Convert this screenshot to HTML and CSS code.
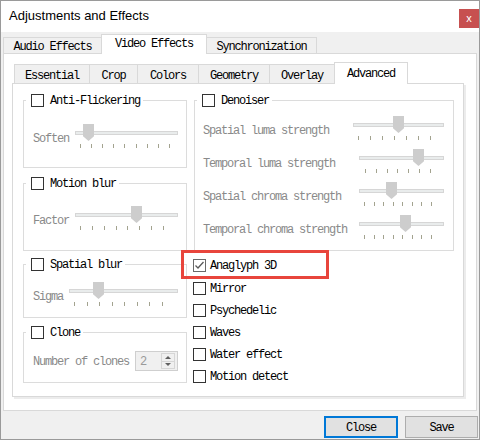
FILE: index.html
```html
<!DOCTYPE html>
<html>
<head>
<meta charset="utf-8">
<link rel="stylesheet" href="styles.css">
</head>
<body>
<div class="window">
  <header class="titlebar">
    <span class="title">Adjustments and Effects</span>
    <span class="close">x</span>
  </header>
  <main class="client">
    <nav class="tabbar outer">
      <span class="tab first t-audio">Audio Effects</span>
      <span class="tab sel t-video">Video Effects</span>
      <span class="tab last t-sync">Synchronization</span>
    </nav>
    <section class="pane outer-pane">
      <nav class="tabbar inner">
        <span class="tab t-ess">Essential</span>
        <span class="tab t-crop">Crop</span>
        <span class="tab t-col">Colors</span>
        <span class="tab t-geo">Geometry</span>
        <span class="tab t-ovl">Overlay</span>
        <span class="tab sel t-adv">Advanced</span>
      </nav>
      <div class="pane inner-pane">
        <div class="col col-left">
          <div class="group g1">
            <div class="gh"><span class="cb"></span><span class="txt">Anti-Flickering</span></div>
            <div class="row">
              <span class="lbl">Soften</span>
              <div class="slider grow">
                <div class="thumb" style="left:8px"></div>
                <div class="track"></div>
                <div class="ticks tk-soften"><i></i><i></i><i></i><i></i><i></i><i></i><i></i><i></i><i></i></div>
              </div>
            </div>
          </div>
          <div class="group g2">
            <div class="gh"><span class="cb"></span><span class="txt">Motion blur</span></div>
            <div class="row">
              <span class="lbl">Factor</span>
              <div class="slider grow">
                <div class="thumb" style="left:56px"></div>
                <div class="track"></div>
                <div class="ticks tk-factor"><i></i><i></i><i></i><i></i><i></i><i></i><i></i><i></i></div>
              </div>
            </div>
          </div>
          <div class="group g3">
            <div class="gh"><span class="cb"></span><span class="txt">Spatial blur</span></div>
            <div class="row">
              <span class="lbl">Sigma</span>
              <div class="slider grow">
                <div class="thumb" style="left:24px"></div>
                <div class="track"></div>
                <div class="ticks tk-sigma"><i></i><i></i><i></i><i></i><i></i><i></i><i></i><i></i></div>
              </div>
            </div>
          </div>
          <div class="group g4">
            <div class="gh"><span class="cb"></span><span class="txt">Clone</span></div>
            <div class="row">
              <span class="lbl plain">Number of clones</span>
              <div class="spin">
                <span class="val">2</span>
                <span class="spin-btns">
                  <span class="arr up"></span>
                  <span class="arr down"></span>
                </span>
              </div>
            </div>
          </div>
        </div>
        <div class="col col-right">
          <div class="group denoiser">
            <div class="gh"><span class="cb"></span><span class="txt">Denoiser</span></div>
            <div class="drow first">
              <span class="lbl">Spatial luma strength</span>
              <div class="slider w91">
                <div class="thumb" style="left:40px"></div>
                <div class="track"></div>
                <div class="ticks tk-sl"><i></i><i></i><i></i><i></i><i></i><i></i><i></i></div>
              </div>
            </div>
            <div class="drow">
              <span class="lbl">Temporal luma strength</span>
              <div class="slider w85">
                <div class="thumb" style="left:54px"></div>
                <div class="track"></div>
                <div class="ticks tk-tl"><i></i><i></i><i></i><i></i><i></i><i></i><i></i></div>
              </div>
            </div>
            <div class="drow">
              <span class="lbl">Spatial chroma strength</span>
              <div class="slider w85">
                <div class="thumb" style="left:27px"></div>
                <div class="track"></div>
                <div class="ticks tk-ch"><i></i><i></i><i></i><i></i><i></i><i></i><i></i><i></i></div>
              </div>
            </div>
            <div class="drow">
              <span class="lbl">Temporal chroma strength</span>
              <div class="slider w85">
                <div class="thumb" style="left:41px"></div>
                <div class="track"></div>
                <div class="ticks tk-ch"><i></i><i></i><i></i><i></i><i></i><i></i><i></i><i></i></div>
              </div>
            </div>
          </div>
          <ul class="checks">
            <li class="first"><span class="cb checked"><svg width="11" height="11" viewBox="0 0 11 11"><polyline points="1.5,5.5 4,8 9.5,2" fill="none" stroke="#5a5a5a" stroke-width="1.3"/></svg></span><span class="txt">Anaglyph 3D</span></li>
            <li><span class="cb"></span><span class="txt">Mirror</span></li>
            <li><span class="cb"></span><span class="txt">Psychedelic</span></li>
            <li><span class="cb"></span><span class="txt">Waves</span></li>
            <li><span class="cb"></span><span class="txt">Water effect</span></li>
            <li><span class="cb"></span><span class="txt">Motion detect</span></li>
          </ul>
        </div>
      </div>
    </section>
    <footer class="buttons">
      <button class="btn default">Close</button>
      <button class="btn save">Save</button>
    </footer>
  </main>
  <div class="annot"></div>
</div>
</body>
</html>
```

FILE: styles.css
```css
body {
  margin: 0;
}

.window {
  position: relative;
  width: 480px;
  height: 440px;
  box-sizing: border-box;
  border: 1px solid #9a9a9a;
  background: #f0f0f0;
  font-family: "Liberation Mono", "DejaVu Sans Mono", monospace;
  font-size: 12px;
  letter-spacing: -1.2px;
  color: #000;
  overflow: hidden;
}

/* title bar */
.titlebar {
  height: 31px;
  background: #fff;
  display: flex;
  justify-content: space-between;
  align-items: flex-start;
}

.title {
  font-family: "Liberation Sans", Arial, sans-serif;
  font-size: 13px;
  letter-spacing: 0;
  line-height: 14px;
  margin: 8px 0 0 8px;
}

.close {
  width: 20px;
  height: 19px;
  margin-top: 8px;
  background: #c75050;
  color: #fff;
  font-family: "Liberation Sans", Arial, sans-serif;
  font-size: 11px;
  letter-spacing: 0;
  display: flex;
  align-items: center;
  justify-content: center;
  line-height: 1;
  padding-bottom: 1px;
  box-sizing: border-box;
}

/* client area */
.client {
  padding: 2px 2px 0 2px;
}

.tabbar {
  display: flex;
  align-items: flex-end;
  position: relative;
  z-index: 1;
  margin-bottom: -1px;
}

.tab {
  box-sizing: border-box;
  border: 1px solid #d9d9d9;
  border-bottom: none;
  border-right: none;
  background: #f0f0f0;
  display: flex;
  align-items: center;
  justify-content: center;
  margin-bottom: 1px;
  white-space: nowrap;
  padding-top: 2px;
}

.tab.sel {
  background: #fff;
  border-right: 1px solid #d9d9d9;
  margin-bottom: 0;
}

.tab.last {
  border-left: none;
  border-right: 1px solid #d9d9d9;
}

.outer.tabbar {
  height: 20px;
}

.outer .tab {
  height: 16px;
}

.outer .tab.sel {
  height: 20px;
  padding-top: 0;
  padding-bottom: 1px;
}

.t-audio { width: 98px; }
.t-video { width: 106px; }
.t-sync { width: 110px; }

.inner.tabbar {
  height: 22px;
  padding-left: 2px;
}

.inner .tab {
  height: 19px;
  padding-top: 3px;
}

.inner .tab.sel {
  height: 22px;
  padding-top: 1px;
  padding-bottom: 0;
}

.t-ess { width: 75px; }
.t-crop { width: 48px; }
.t-col { width: 61px; }
.t-geo { width: 71px; }
.t-ovl { width: 65px; }
.t-adv { width: 74px; }

.pane {
  box-sizing: border-box;
  border: 1px solid #d9d9d9;
  background: #fff;
}

.outer-pane {
  height: 358px;
  padding: 8px 12px 13px 8px;
}

.inner-pane {
  height: 314px;
  display: flex;
  gap: 6px;
  padding: 10px 0 0 10px;
  box-shadow: 2px 2px 0 #ececec;
}

.col {
  display: flex;
  flex-direction: column;
}

.col-left { width: 164px; }
.col-right { width: 261px; }

/* group boxes */
.group {
  box-sizing: border-box;
  border: 1px solid #dcdcdc;
}

.gh {
  display: flex;
  align-items: center;
  gap: 6px;
  width: fit-content;
  height: 13px;
  line-height: 13px;
  margin: -7px 0 0 2px;
  padding: 0 3px 0 5px;
  background: #fff;
}

.txt {
  padding-top: 2px;
  line-height: 13px;
}

.g1 { margin-top: 6px; height: 68px; }
.g2 { margin-top: 15px; height: 68px; }
.g3 { margin-top: 13px; height: 54px; }
.g4 { margin-top: 14px; height: 51px; }

.denoiser {
  margin: 6px 0 0 1px;
  height: 151px;
}

.row {
  display: flex;
  align-items: flex-start;
  gap: 6px;
  padding: 0 8px 0 9px;
}

.g1 .row { margin-top: 17px; }
.g2 .row { margin-top: 16px; }
.g3 .row { margin-top: 11px; }
.g4 .row { margin-top: 12px; align-items: center; }

.lbl {
  color: #8a8a8a;
  line-height: 12px;
  margin-top: 9px;
  white-space: nowrap;
}

.lbl.plain {
  margin-top: 0;
  padding-top: 2px;
}

.drow {
  display: flex;
  justify-content: space-between;
  align-items: flex-start;
  padding: 0 9px 0 8px;
  margin-top: 9px;
}

/* checkbox */
.cb {
  box-sizing: border-box;
  width: 13px;
  height: 13px;
  border: 1px solid #333;
  background: #fff;
  flex: none;
  display: flex;
  align-items: center;
  justify-content: center;
}

.cb.checked {
  border-color: #6a6a6a;
}

/* slider */
.slider {
  position: relative;
  height: 24px;
}

.slider.grow { flex: 1; }
.w91 { width: 91px; }
.w85 { width: 85px; }

.track {
  box-sizing: border-box;
  margin-top: 7px;
  height: 4px;
  border: 1px solid #d6d6d6;
  background: #e9ecec;
}

.thumb {
  position: absolute;
  top: 0;
  width: 11px;
  height: 17px;
  background: #cdcdcd;
  clip-path: polygon(0 0, 100% 0, 100% 72%, 50% 100%, 0 72%);
}

.ticks {
  display: flex;
  justify-content: space-between;
  margin-top: 9px;
  height: 4px;
}

.ticks i {
  width: 1px;
  height: 4px;
  background: #a3a38f;
}

.tk-soften { padding: 0 8px 0 5px; }
.tk-factor { padding: 0 14px 0 5px; }
.tk-sigma { padding: 0 15px 0 5px; }
.tk-sl { padding: 0 13px 0 5px; }
.tk-tl { padding: 0 13px 0 6px; }
.tk-ch { padding: 0 12px 0 5px; }

/* spin box */
.spin {
  box-sizing: border-box;
  width: 43px;
  height: 20px;
  border: 1px solid #cfcfcf;
  background: #f0f0f0;
  display: flex;
  align-items: center;
}

.val {
  flex: 1;
  padding-left: 4px;
  padding-top: 2px;
  color: #9a9a9a;
}

.spin-btns {
  box-sizing: border-box;
  width: 14px;
  height: 16px;
  margin-right: 2px;
  border: 1px solid #d6d6d6;
  display: flex;
  flex-direction: column;
}

.arr {
  flex: 1;
  display: flex;
  align-items: center;
  justify-content: center;
}

.arr.up { border-bottom: 1px solid #d6d6d6; }

.arr::before {
  content: "";
  width: 0;
  height: 0;
  border-left: 3px solid transparent;
  border-right: 3px solid transparent;
}

.arr.up::before { border-bottom: 3px solid #606060; }
.arr.down::before { border-top: 3px solid #606060; }

/* check list */
.checks {
  list-style: none;
  margin: 0;
  padding: 0;
}

.checks li {
  display: flex;
  align-items: center;
  gap: 4px;
  height: 22px;
}

.checks li.first {
  margin-top: 3px;
  margin-bottom: 1px;
}

/* buttons */
.buttons {
  display: flex;
  justify-content: flex-end;
  gap: 7px;
  padding-top: 5px;
  margin-right: -1px;
}

.btn {
  box-sizing: border-box;
  width: 74px;
  height: 22px;
  border: 1px solid #adadad;
  background: #e1e1e1;
  font: inherit;
  letter-spacing: inherit;
  color: #000;
  padding: 2px 0 0;
}

.btn.save { width: 73px; }

.btn.default {
  border: 2px solid #0078d7;
}

/* annotation box */
.annot {
  position: absolute;
  left: 180px;
  top: 249px;
  width: 148px;
  height: 29px;
  box-sizing: border-box;
  border: 3px solid #e8453c;
}
```
